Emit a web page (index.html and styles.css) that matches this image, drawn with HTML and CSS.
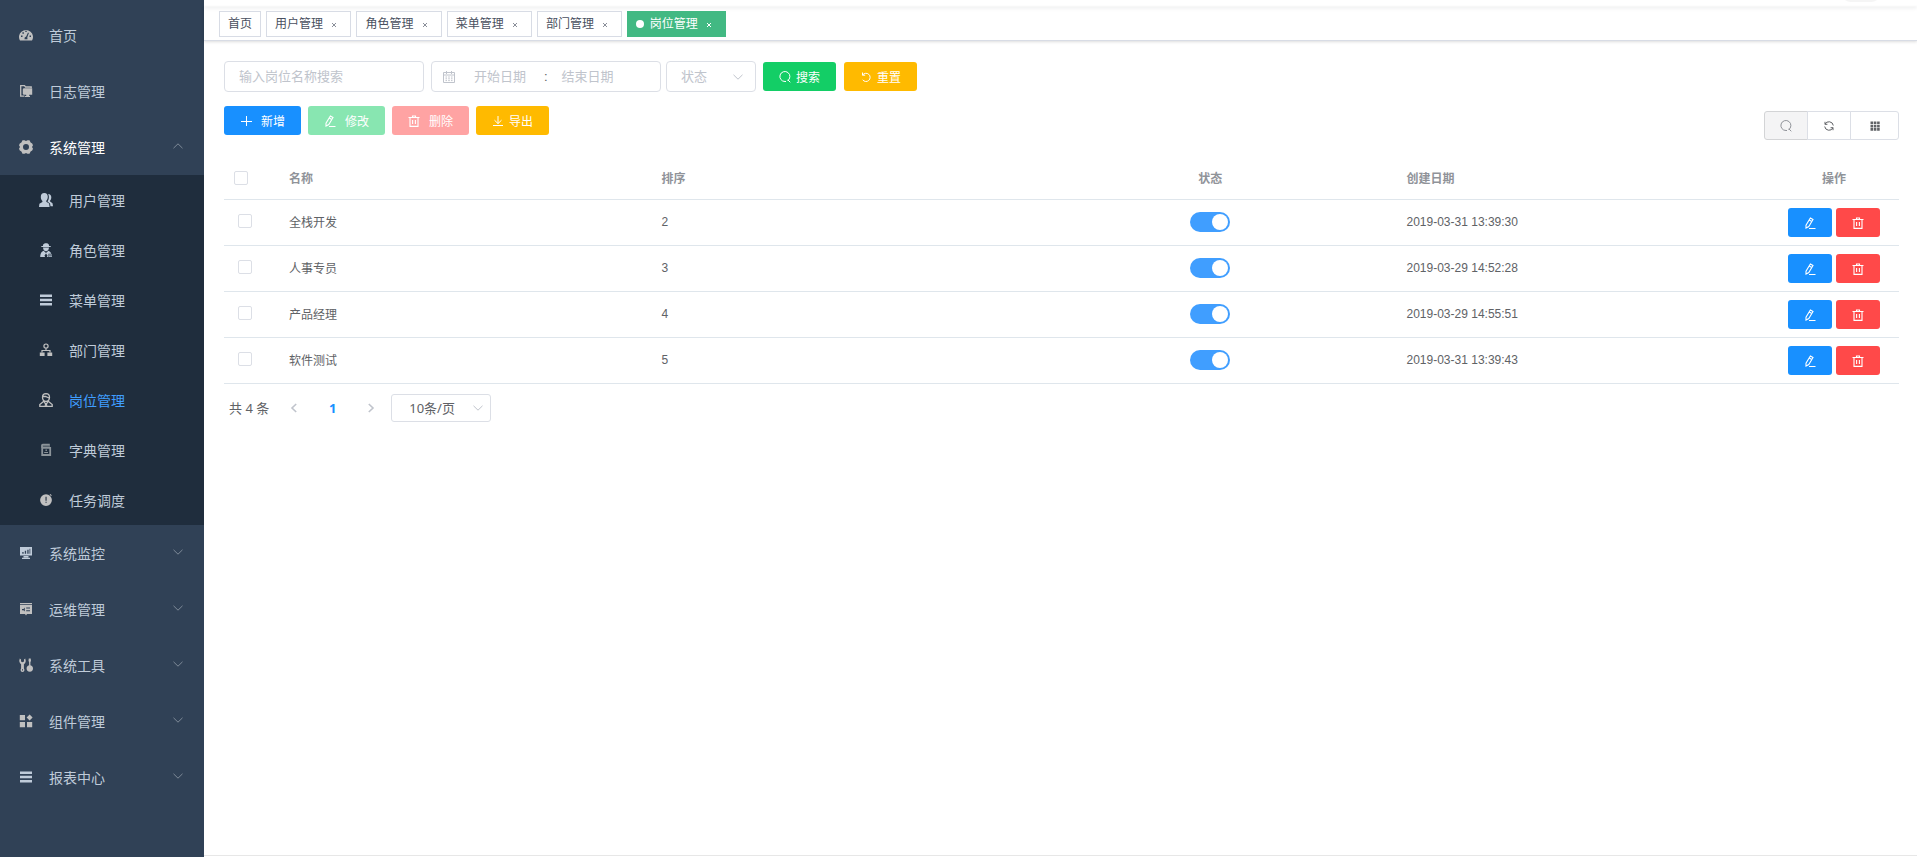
FILE: index.html
```html
<!DOCTYPE html>
<html lang="zh-CN">
<head>
<meta charset="utf-8">
<title>岗位管理</title>
<link rel="stylesheet" href="styles.css">
</head>
<body>
<svg class="sprite" aria-hidden="true">
  <symbol id="up" viewBox="0 0 12 12"><path d="M1.500 8.200 6 3.800l4.500 4.400" fill="none" stroke="currentColor"/></symbol>
  <symbol id="down" viewBox="0 0 12 12"><path d="M1.500 3.800 6 8.200l4.500-4.400" fill="none" stroke="currentColor"/></symbol>
  <symbol id="close" viewBox="0 0 8 8"><path d="m2 2 4 4M6 2 2 6" fill="none" stroke="currentColor"/></symbol>
  <symbol id="search" viewBox="0 0 12 12"><path d="M8.600 9.700A5 5 0 1 0 6 10.500H7M8.800 8.800 11.300 11.300" fill="none" stroke="currentColor"/></symbol>
  <symbol id="reset" viewBox="0 0 12 12"><path d="M2.500 1.500v2.700h2.700M2.700 4A4.100 4.100 0 1 1 2.700 8.800" fill="none" stroke="currentColor"/></symbol>
  <symbol id="plus" viewBox="0 0 12 12"><path d="M6.500 1v10M1 6.500h11" fill="none" stroke="currentColor"/></symbol>
  <symbol id="edit" viewBox="0 0 12 12"><path d="M6.400 1 9 2.500 4.800 9.600 2 11 2 8.200zM5.200 3l2.600 1.500M5 11.500h6.500" fill="none" stroke="currentColor" stroke-width="1.100"/></symbol>
  <symbol id="trash" viewBox="0 0 12 12"><path d="M.5 2.500h11M4.500 2.200V1h3v1.200M2 2.500v8.900h8V2.500M4.600 5v4M7.400 5v4" fill="none" stroke="currentColor" stroke-width="1.100"/></symbol>
  <symbol id="download" viewBox="0 0 12 12"><path d="M6 1v7.500M2.500 5.200 6 8.600l3.500-3.400M1 10.500h10" fill="none" stroke="currentColor"/></symbol>
  <symbol id="refresh" viewBox="0 0 12 12"><path d="M2 4.300V1.800M2 4.300h2.400M2 4.200A4.400 4.400 0 0 1 10.300 5.500M10 7.700v2.500M10 7.700H7.600M10 7.800A4.400 4.400 0 0 1 1.700 6.500" fill="none" stroke="currentColor"/></symbol>
  <symbol id="grid" viewBox="0 0 12 12"><path d="M1.500 1.500h2.600v2.600H1.500zM4.800 1.500h2.600v2.600H4.800zM8.100 1.500h2.600v2.600H8.100zM1.500 4.800h2.600v2.600H1.500zM4.800 4.800h2.600v2.600H4.800zM8.100 4.800h2.600v2.600H8.100zM1.500 8.100h2.600v2.600H1.500zM4.800 8.100h2.600v2.600H4.800zM8.100 8.100h2.600v2.600H8.100z" fill="currentColor"/></symbol>
  <symbol id="calendar" viewBox="0 0 14 14"><path d="M1.500 2.500h11v10h-11zM1.500 5h11M4.500 1v3M9.500 1v3M3.500 7h1.500M6.200 7h1.600M9 7h1.500M3.500 8.800h1.500M6.200 8.800h1.600M9 8.800h1.500M3.500 10.600h1.500M6.200 10.600h1.600M9 10.600h1.500" fill="none" stroke="currentColor"/></symbol>
  <symbol id="left" viewBox="0 0 12 12"><path d="M8.200 2 4 6l4.200 4" fill="none" stroke="currentColor" stroke-width="1.600"/></symbol>
  <symbol id="right" viewBox="0 0 12 12"><path d="M3.800 2 8 6l-4.200 4" fill="none" stroke="currentColor" stroke-width="1.600"/></symbol>

  <symbol id="dashboard" viewBox="0 0 14 14"><path fill="currentColor" fill-rule="evenodd" d="M1 12.500A7 6.900 0 1 1 13 12.500zM2 7.400v1.500h1.500V7.400zM3.400 4.200v1.500h1.500V4.200zM6.300 2.700v1.400h1.400V2.700zM10.500 7.400v1.500H12V7.400zM5.500 11.300h3L8.300 9.300 9.900 5 9 4.600 7.200 8.500 5.700 9.500z"/></symbol>
  <symbol id="log" viewBox="0 0 14 14"><path fill="none" stroke="currentColor" stroke-width="1.300" d="M5.500 12.200H1.700V1.700h3.800l1 1.300h5.700v1"/><path fill="currentColor" d="M4.600 4.200h8.600v6.600h-3V12H11v1H6v-1h1.200v-1.200H4.600L3.800 10V5.200z"/></symbol>
  <symbol id="gear" viewBox="0 0 14 14"><path fill="currentColor" fill-rule="evenodd" d="M3.500.2 5.500.3 7 1 8.500.3l2-.1 1.100 2.300L13.200 3.400 14 5.300 13 7l1 1.700-.8 1.900-1.600.9-1.100 2.300-2-.1L7 13l-1.500.7-2 .1-1.100-2.300-1.600-.9L0 8.700 1 7 0 5.300l.8-1.900 1.600-.9zM7 4a3 3 0 1 0 0 6 3 3 0 0 0 0-6z"/></symbol>
  <symbol id="users" viewBox="0 0 14 14"><path fill="currentColor" d="M5.300 0C7.700 0 8.800 1.600 8.800 3.800c0 1.700-.6 3-1.500 4v1l2.800 1.800.5 3.400H0l.4-3.200 3-1.900v-1C2.400 7 1.800 5.600 1.800 3.900 1.800 1.600 3 0 5.300 0z"/><path fill="currentColor" d="M9.200 1c2 0 3.100 1.300 3.100 3.300 0 1.500-.5 2.500-1.200 3.300v1l2.400 1.600.5 3h-2.500l-.5-2.800-2.300-1.700V8C9.900 6.500 10.400 3.500 9.200 1z"/></symbol>
  <symbol id="role" viewBox="0 0 14 14"><path fill="currentColor" d="M4.300 1.300 6 .2h2.200l1.500 1.100.4 1.700h1.600v1H2.300V3h1.600zM4 4.600h6C9.800 7.200 8.600 8.200 7 8.200S4.200 7.200 4 4.600zM1.200 14c0-3.600 1.300-5.400 3.400-6.200L7 10l2.400-2.200c1.400.6 2.400 1.600 2.900 3H9.500V14H7.900l.6-1.600L7 10.600l-1.500 1.800.6 1.600zM10 11.600h3v1h-3zM10 13.200h3v.8h-3z"/></symbol>
  <symbol id="bars" viewBox="0 0 14 14"><path fill="currentColor" d="M1 1.500h12V4H1zM1 5.700h12v2.600H1zM1 10h12v2.500H1z"/></symbol>
  <symbol id="tree" viewBox="0 0 14 14"><path fill="none" stroke="currentColor" stroke-width="1.200" d="M7 1a2.100 2.100 0 1 0 0 4.200A2.100 2.100 0 1 0 7 1zM7 5.200v2.300M3 9.500V7.500h8v2"/><path fill="currentColor" d="M.8 9.500h4.800V13H.8zM8.400 9.500h4.800V13H8.400z"/></symbol>
  <symbol id="post" viewBox="0 0 14 14"><path fill="none" stroke="currentColor" stroke-width="1.300" d="M7 .7a3.600 3.600 0 0 1 3.500 3.500C10.500 6.800 9 8.300 7 8.300S3.500 6.800 3.500 4.200A3.600 3.600 0 0 1 7 .7zM4 3.500h2.500L10 5M4.800 8.200.8 11.500v1.800h12.400v-1.800l-4-3.300M5 8.500l2 3.200 2-3.200M6 12.500l1-1.600 1 1.600"/></symbol>
  <symbol id="dict" viewBox="0 0 14 14"><path fill="none" stroke="currentColor" stroke-width="1.800" d="M3.200 4.800h8V12h-8zM3 5V2.200q0-.6.800-.6h7"/><path fill="currentColor" d="M3 2.600h8v1H3zM6.500 6.600h1.400V8H6.500zM5.200 9h3.800v1H5.200z"/></symbol>
  <symbol id="timer" viewBox="0 0 14 14"><path fill="currentColor" fill-rule="evenodd" d="M7 1.200a5.900 5.900 0 1 0 0 11.800A5.900 5.900 0 0 0 7 1.200zM6.500 3.700h1.100v4H6.500zM6.500 8.700h1.100v1.100H6.500zM11.300 1l1.500 1.300-.7.700-1.500-1.300z"/></symbol>
  <symbol id="monitor" viewBox="0 0 14 14"><path fill="currentColor" fill-rule="evenodd" d="M1 1h12v8.500H1zM3.300 6V7.700h1.300V6zM5.800 4.800v2.900h1.300V4.800zM8.300 3.800v3.900h1.300V3.800zM10.500 2.800v4.900h.8V2.800zM4.500 10h5v1.500h-5zM3 11.800h8V13H3z"/></symbol>
  <symbol id="ops" viewBox="0 0 14 14"><path fill="currentColor" fill-rule="evenodd" d="M1 1h12v1.300H1zM1 3h12v9H8l-1 1.500L6 12H1zM3 7h1.500L5.800 5.500v4L4.500 8.300H3zM7.200 5.500v1H11v-1zM7.200 8.300v1H11v-1z"/></symbol>
  <symbol id="tools" viewBox="0 0 14 14"><path fill="currentColor" fill-rule="evenodd" d="M.8.500 2 1.500v2l1.500.8L5 3.500v-2L6.200.5 6.800 3l-.6 2-1.300 1.200v4l.6 1.700-.6 1.500-1.400.5-1.400-.5-.6-1.500.6-1.700v-4L.9 5 .2 3zM3 11.200v1.200h1v-1.200zM9.800.5h1.900l.3 2.200-.6 1.500v3c1.800.5 2.600 1.600 2.600 3.200 0 1.900-1 3.300-3.200 3.300s-3.200-1.400-3.200-3.300c0-1.600.8-2.700 2.500-3.200v-3l-.6-1.500z"/></symbol>
  <symbol id="blocks" viewBox="0 0 14 14"><path fill="currentColor" d="M.8 1h5.200v5.200H.8zM.8 8h5.200v5.200H.8zM8 8h5.200v5.200H8zM10.600.5l3 3-3 3-3-3z"/></symbol>
</svg>

<div class="app">
  <nav class="sidebar">
    <a class="item" href="#"><svg><use href="#dashboard"/></svg><span>首页</span></a>
    <a class="item" href="#"><svg><use href="#log"/></svg><span>日志管理</span></a>
    <a class="item open" href="#"><svg><use href="#gear"/></svg><span>系统管理</span><svg class="arrow"><use href="#up"/></svg></a>
    <div class="submenu">
      <a class="item pale" href="#"><svg><use href="#users"/></svg><span>用户管理</span></a>
      <a class="item pale" href="#"><svg><use href="#role"/></svg><span>角色管理</span></a>
      <a class="item pale" href="#"><svg><use href="#bars"/></svg><span>菜单管理</span></a>
      <a class="item" href="#"><svg><use href="#tree"/></svg><span>部门管理</span></a>
      <a class="item current" href="#"><svg><use href="#post"/></svg><span>岗位管理</span></a>
      <a class="item dim" href="#"><svg><use href="#dict"/></svg><span>字典管理</span></a>
      <a class="item" href="#"><svg><use href="#timer"/></svg><span>任务调度</span></a>
    </div>
    <a class="item pale" href="#"><svg><use href="#monitor"/></svg><span>系统监控</span><svg class="arrow"><use href="#down"/></svg></a>
    <a class="item" href="#"><svg><use href="#ops"/></svg><span>运维管理</span><svg class="arrow"><use href="#down"/></svg></a>
    <a class="item" href="#"><svg><use href="#tools"/></svg><span>系统工具</span><svg class="arrow"><use href="#down"/></svg></a>
    <a class="item" href="#"><svg><use href="#blocks"/></svg><span>组件管理</span><svg class="arrow"><use href="#down"/></svg></a>
    <a class="item pale" href="#"><svg><use href="#bars"/></svg><span>报表中心</span><svg class="arrow"><use href="#down"/></svg></a>
  </nav>

  <div class="main">
    <header class="navbar"><span class="avatar"></span></header>
    <div class="tags">
      <div class="tag"><a href="#">首页</a></div>
      <div class="tag"><a href="#">用户管理</a> <button aria-label="关闭"><svg><use href="#close"/></svg></button></div>
      <div class="tag"><a href="#">角色管理</a> <button aria-label="关闭"><svg><use href="#close"/></svg></button></div>
      <div class="tag"><a href="#">菜单管理</a> <button aria-label="关闭"><svg><use href="#close"/></svg></button></div>
      <div class="tag"><a href="#">部门管理</a> <button aria-label="关闭"><svg><use href="#close"/></svg></button></div>
      <div class="tag active"><i class="dot"></i> <a href="#">岗位管理</a> <button aria-label="关闭"><svg><use href="#close"/></svg></button></div>
    </div>

    <main class="content">
      <form class="filters">
        <input class="field keyword" type="text" placeholder="输入岗位名称搜索" aria-label="输入岗位名称搜索">
        <div class="field range">
          <svg><use href="#calendar"/></svg>
          <input type="text" placeholder="开始日期" aria-label="开始日期">
          <span>:</span>
          <input class="end" type="text" placeholder="结束日期" aria-label="结束日期">
        </div>
        <div class="select status">
          <select class="field" aria-label="状态"><option>状态</option></select>
          <svg><use href="#down"/></svg>
        </div>
        <div class="actions">
          <button type="button" class="btn green"><svg><use href="#search"/></svg>搜索</button>
          <button type="button" class="btn yellow"><svg><use href="#reset"/></svg>重置</button>
        </div>
      </form>

      <div class="toolbar">
        <div class="actions compact">
          <button class="btn blue wide"><svg><use href="#plus"/></svg>新增</button>
          <button class="btn green wide" disabled><svg><use href="#edit"/></svg>修改</button>
          <button class="btn red wide" disabled><svg><use href="#trash"/></svg>删除</button>
          <button class="btn yellow"><svg><use href="#download"/></svg>导出</button>
        </div>
        <div class="group">
          <button class="pressed" aria-label="搜索"><svg><use href="#search"/></svg></button>
          <button aria-label="刷新"><svg><use href="#refresh"/></svg></button>
          <button class="columns" aria-label="列设置"><svg><use href="#grid"/></svg></button>
        </div>
      </div>

      <table>
        <colgroup><col class="c-check"><col><col><col><col><col class="c-ops"></colgroup>
        <thead>
          <tr><th class="check"><input type="checkbox" class="box" aria-label="全选"></th><th>名称</th><th>排序</th><th class="mid">状态</th><th>创建日期</th><th class="mid">操作</th></tr>
        </thead>
        <tbody>
          <tr><td class="check"><input type="checkbox" class="box" aria-label="选择 全栈开发"></td><td>全栈开发</td><td>2</td><td class="mid"><input type="checkbox" role="switch" class="switch" checked aria-label="状态"></td><td>2019-03-31 13:39:30</td><td class="ops-cell"><div class="ops"><button class="btn blue" aria-label="修改"><svg><use href="#edit"/></svg></button><button class="btn red" aria-label="删除"><svg><use href="#trash"/></svg></button></div></td></tr>
          <tr><td class="check"><input type="checkbox" class="box" aria-label="选择 人事专员"></td><td>人事专员</td><td>3</td><td class="mid"><input type="checkbox" role="switch" class="switch" checked aria-label="状态"></td><td>2019-03-29 14:52:28</td><td class="ops-cell"><div class="ops"><button class="btn blue" aria-label="修改"><svg><use href="#edit"/></svg></button><button class="btn red" aria-label="删除"><svg><use href="#trash"/></svg></button></div></td></tr>
          <tr><td class="check"><input type="checkbox" class="box" aria-label="选择 产品经理"></td><td>产品经理</td><td>4</td><td class="mid"><input type="checkbox" role="switch" class="switch" checked aria-label="状态"></td><td>2019-03-29 14:55:51</td><td class="ops-cell"><div class="ops"><button class="btn blue" aria-label="修改"><svg><use href="#edit"/></svg></button><button class="btn red" aria-label="删除"><svg><use href="#trash"/></svg></button></div></td></tr>
          <tr><td class="check"><input type="checkbox" class="box" aria-label="选择 软件测试"></td><td>软件测试</td><td>5</td><td class="mid"><input type="checkbox" role="switch" class="switch" checked aria-label="状态"></td><td>2019-03-31 13:39:43</td><td class="ops-cell"><div class="ops"><button class="btn blue" aria-label="修改"><svg><use href="#edit"/></svg></button><button class="btn red" aria-label="删除"><svg><use href="#trash"/></svg></button></div></td></tr>
        </tbody>
      </table>

      <div class="pager">
        <span class="total">共 4 条</span>
        <button aria-label="上一页" disabled><svg><use href="#left"/></svg></button>
        <button class="page">1</button>
        <button aria-label="下一页" disabled><svg><use href="#right"/></svg></button>
        <div class="select size">
          <select class="field" aria-label="每页条数"><option>10条/页</option></select>
          <svg><use href="#down"/></svg>
        </div>
      </div>
    </main>
    <footer class="footer"></footer>
  </div>
</div>
</body>
</html>
```
FILE: styles.css
```css
* { box-sizing: border-box; }
body {
  margin: 0;
  font-family: "Liberation Sans", "Noto Sans CJK SC", sans-serif;
  font-size: 12px;
  color: #606266;
  background: #fff;
}
a { color: inherit; text-decoration: none; }
button, input, select { font: inherit; color: inherit; margin: 0; }
button { cursor: pointer; }
svg { width: 12px; height: 12px; flex: none; }
.sprite { position: absolute; width: 0; height: 0; }
.app { display: flex; min-height: 100vh; }

/* Sidebar */
.sidebar { width: 204px; flex: none; padding-top: 7px; background: #304156; }
.item {
  display: flex;
  align-items: center;
  height: 56px;
  padding: 0 20px 0 19px;
  font-size: 14px;
  color: #bfcbd9;
}
.item svg { width: 14px; height: 14px; margin-right: 16px; color: #c0c0c0; }
.item.pale svg { color: #bfcbd9; }
.item.dim svg { color: #8b9399; }
.item.open { color: #fff; }
.item .arrow, .item.pale .arrow { width: 12px; height: 12px; margin: 0 0 3px auto; color: #7e8a98; }
.submenu { background: #1f2d3d; }
.submenu .item { height: 50px; padding-left: 39px; }
.submenu .current { color: #409eff; }

/* Top bars */
.main { flex: 1; min-width: 0; display: flex; flex-direction: column; }
.navbar {
  position: relative;
  display: flex;
  align-items: flex-end;
  justify-content: flex-end;
  height: 7px;
  padding-right: 36px;
  box-shadow: 0 1px 4px rgba(0, 21, 41, .08);
}
.avatar { width: 40px; height: 40px; flex: none; margin-bottom: 5px; border-radius: 10px; background: #f5f5f5; }
.tags {
  position: relative;
  display: flex;
  gap: 5px;
  height: 34px;
  padding: 4px 15px 0;
  border-bottom: 1px solid #d8dce5;
  box-shadow: 0 1px 3px rgba(0, 0, 0, .12), 0 0 3px rgba(0, 0, 0, .04);
}
.tag { height: 26px; line-height: 24px; padding: 0 8px; border: 1px solid #d8dce5; color: #495060; white-space: nowrap; }
.tag button { width: 16px; height: 16px; padding: 0; border: 0; background: none; line-height: 16px; color: #8a8f99; vertical-align: middle; }
.tag button svg { display: block; width: 8px; height: 8px; margin: 4px; }
.tag.active { background: #42b983; border-color: #42b983; color: #fff; }
.tag.active button { color: #fff; }
.dot { display: inline-block; width: 8px; height: 8px; margin-right: 2px; border-radius: 50%; background: #fff; }

/* Form controls */
.content { flex: 1; padding: 20px 18px 20px 20px; }
.filters { display: flex; align-items: center; gap: 7px; }
.field { height: 31px; border: 1px solid #dcdfe6; border-radius: 4px; background: #fff; font-size: 13px; outline: 0; }
.keyword { width: 200px; padding: 0 14px; }
::placeholder { color: #c0c4cc; opacity: 1; }
.range { display: flex; align-items: center; width: 230px; padding-left: 10px; color: #606266; }
.range svg { width: 14px; height: 14px; color: #c0c4cc; }
.range input { width: 88px; padding: 0; border: 0; outline: 0; background: none; text-align: center; }
.range .end { width: 80px; }
.select { position: relative; }
.select select { display: block; width: 100%; padding: 0 14px; appearance: none; }
.select svg { position: absolute; right: 12px; top: 50%; margin-top: -6px; color: #c0c4cc; pointer-events: none; }
.status { width: 90px; margin-left: -2px; }
.status select { color: #c0c4cc; }
.btn {
  display: inline-flex;
  align-items: center;
  gap: 5px;
  height: 29px;
  padding: 0 16px;
  border: 0;
  border-radius: 3px;
  color: #fff;
}
.wide { gap: 9px; }
.blue { background: #1890ff; }
.green { background: #13ce66; }
.red { background: #ff4949; }
.yellow { background: #ffba00; }
.btn:disabled { opacity: .5; }

.toolbar { display: flex; justify-content: space-between; padding: 14px 0 16px; }
.actions { display: flex; gap: 8px; }
.compact { gap: 7px; }
.group { display: flex; margin-top: 5px; }
.group button {
  display: flex;
  align-items: center;
  justify-content: center;
  width: 44px;
  height: 29px;
  margin-right: -1px;
  padding: 0;
  border: 1px solid #dcdfe6;
  background: #fff;
}
.group .pressed { background: #f4f4f5; border-color: #d3d4d6; color: #909399; border-radius: 3px 0 0 3px; }
.group .columns { width: 49px; margin-right: 0; border-radius: 0 3px 3px 0; }

/* Table */
table { width: 100%; table-layout: fixed; border-collapse: separate; border-spacing: 0; }
.c-check { width: 55px; }
.c-ops { width: 130px; }
th, td { height: 46px; padding: 0 10px 2px; border-bottom: 1px solid #dfe6ec; text-align: left; font-weight: 400; }
th { height: 44px; padding-bottom: 0; color: #909399; font-weight: 700; }
th.mid, td.mid { text-align: center; }
td.check { padding-left: 14px; }
td.ops-cell { padding-bottom: 0; }
.box { appearance: none; display: block; width: 14px; height: 14px; border: 1px solid #dcdfe6; border-radius: 2px; background: #fff; }
td .box { margin-bottom: 2px; }
.switch {
  appearance: none;
  display: block;
  width: 40px;
  height: 20px;
  margin: 0 auto;
  padding: 2px;
  border-radius: 10px;
  background: #409eff;
}
.switch::before { content: ""; display: block; width: 16px; height: 16px; margin-left: 20px; border-radius: 50%; background: #fff; }
.ops { display: flex; justify-content: center; gap: 4px; }

/* Pagination */
.pager { display: flex; align-items: center; margin-top: 10px; padding-left: 5px; font-family: "Noto Sans", "Noto Sans CJK SC", sans-serif; font-size: 13px; }
.total { margin-right: 11px; padding-bottom: 2px; }
.pager button { display: flex; align-items: center; justify-content: center; width: 39px; height: 28px; padding: 0; border: 0; background: none; }
.pager button:disabled { width: 28px; color: #c0c4cc; }
.pager .page { width: 49px; color: #1890ff; font-weight: 700; }
.size { width: 100px; margin-left: 6px; }
.size select { height: 28px; padding: 0 25px 0 17px; border-radius: 3px; }
.size svg { right: 7px; }

.footer { height: 2px; border-top: 1px solid #e7e7e7; }
```
